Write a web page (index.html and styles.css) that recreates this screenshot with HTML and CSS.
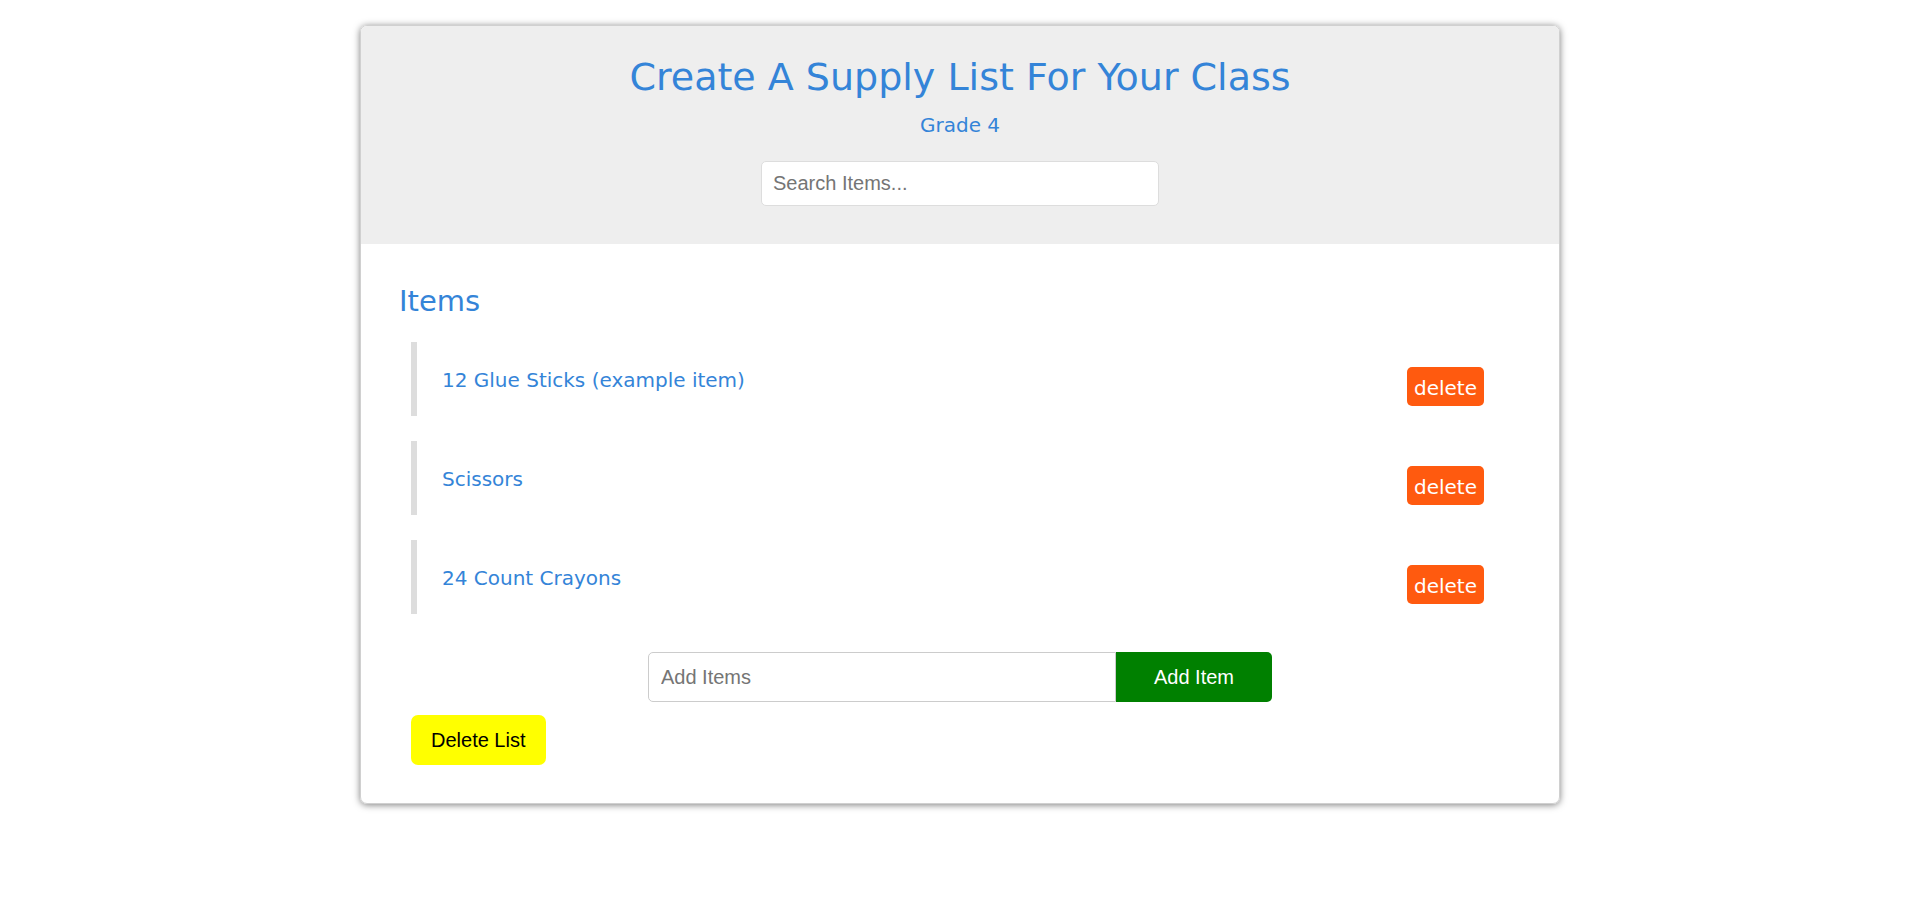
FILE: index.html
```html
<!DOCTYPE html>
<html lang="en">
<head>
<meta charset="utf-8">
<title>Supply List</title>
<link rel="stylesheet" href="styles.css">
</head>
<body>
<main class="card">
  <header class="card-header">
    <h1 class="title">Create A Supply List For Your Class</h1>
    <p class="grade">Grade 4</p>
    <input class="search" type="text" placeholder="Search Items..." aria-label="Search Items">
  </header>
  <section class="content">
    <h2 class="subtitle">Items</h2>
    <ul class="items">
      <li class="item"><span class="name">12 Glue Sticks (example item)</span><button class="delete" type="button">delete</button></li>
      <li class="item"><span class="name">Scissors</span><button class="delete" type="button">delete</button></li>
      <li class="item"><span class="name">24 Count Crayons</span><button class="delete" type="button">delete</button></li>
    </ul>
    <form class="add-form">
      <input class="add-input" type="text" placeholder="Add Items" aria-label="Add Items">
      <button class="add-button" type="button">Add Item</button>
    </form>
    <button class="clear" type="button">Delete List</button>
  </section>
</main>
</body>
</html>
```

FILE: styles.css
```css
* {
  box-sizing: border-box;
}

body {
  min-height: 100vh;
  margin: 0;
  padding: 25px 20px;
  background: #fff;
  color: #3484d8;
  font-family: Tahoma, "DejaVu Sans", sans-serif;
  font-size: 20px;
  line-height: 26px;
}

input,
button {
  font-family: Arial, "Liberation Sans", sans-serif;
  font-size: 20px;
  line-height: 24px;
}

input::placeholder {
  color: #757575;
  opacity: 1;
}

button {
  border: 0;
  cursor: pointer;
}

.card {
  max-width: 1200px;
  margin: 0 auto;
  border: 1px solid #d0d0d0;
  border-radius: 7px;
  box-shadow: 0 1px 7px rgba(0, 0, 0, 0.5);
}

.card-header {
  display: flex;
  flex-direction: column;
  align-items: center;
  padding: 27px 38px 38px;
  border-radius: 6px 6px 0 0;
  background: #eee;
  text-align: center;
}

.title {
  margin: 0;
  font-size: 38px;
  font-weight: 400;
  line-height: 48px;
}

.grade {
  margin: 11px 0 23px;
}

.search {
  width: 398px;
  max-width: 100%;
  height: 45px;
  padding: 0 11px;
  border: 1px solid #ddd;
  border-radius: 5px;
}

.content {
  padding: 38px;
}

.subtitle {
  margin: 0 0 22px;
  font-size: 29px;
  font-weight: 400;
  line-height: 38px;
}

.items {
  display: flex;
  flex-direction: column;
  gap: 25px;
  margin: 0 12px 38px;
  padding: 0;
  list-style: none;
}

.item {
  display: flex;
  justify-content: space-between;
  align-items: flex-start;
  height: 74px;
  padding: 25px 25px 0;
  border-left: 6px solid #ddd;
}

.delete {
  height: 39px;
  padding: 2px 7px 0;
  border-radius: 5px;
  background: #ff5a0f;
  color: #fff;
  font-family: Tahoma, "DejaVu Sans", sans-serif;
}

.add-form {
  display: flex;
  justify-content: center;
  margin-bottom: 13px;
}

.add-input {
  flex: 0 1 468px;
  min-width: 0;
  height: 50px;
  padding: 0 12px;
  border: 1px solid #ccc;
  border-radius: 5px 0 0 5px;
}

.add-button {
  height: 50px;
  padding: 0 38px;
  border-radius: 0 5px 5px 0;
  background: #008000;
  color: #fff;
}

.clear {
  height: 50px;
  margin-left: 12px;
  padding: 0 20px;
  border-radius: 7px;
  background: #ff0;
  color: #000;
}
```
